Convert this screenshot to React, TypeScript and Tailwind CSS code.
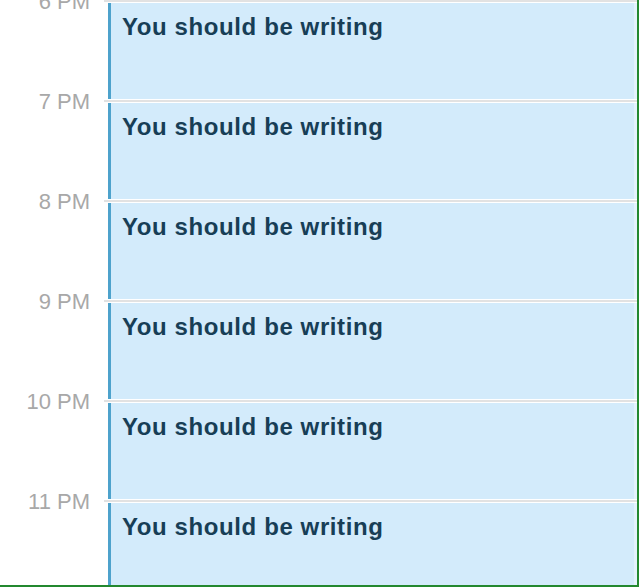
export default function App() {
  const hours = ["6 PM", "7 PM", "8 PM", "9 PM", "10 PM", "11 PM"];
  return (
    <div
      className="w-[639px] h-[587px] overflow-hidden bg-white border-r-2 border-b-2 border-[#23882f] flex flex-col"
      style={{ fontFamily: '"Liberation Sans", Arial, Helvetica, sans-serif' }}
    >
      {hours.map((h) => (
        <div key={h} className="flex h-[100px] shrink-0">
          <div className="w-[104px] shrink-0 relative">
            <span className="absolute right-[14px] top-[-9px] text-[22px] leading-[22px] text-[#a8a8a8] whitespace-nowrap">
              {h}
            </span>
          </div>
          <div className="flex-1 flex flex-col">
            <div className="h-[2px] bg-[#e2e2e2] shrink-0" />
            <div className="h-[1px] shrink-0" />
            <div className="ml-[4px] h-[96px] shrink-0 bg-[#d3ebfb] border-l-[3px] border-l-[#4da2cc] border-r-[3px] border-r-[#e4f2fc] pl-[11px] pt-[12px]">
              <div className="text-[24px] leading-[24px] font-bold tracking-[0.6px] text-[#173e56]">
                You should be writing
              </div>
            </div>
          </div>
        </div>
      ))}
    </div>
  );
}
